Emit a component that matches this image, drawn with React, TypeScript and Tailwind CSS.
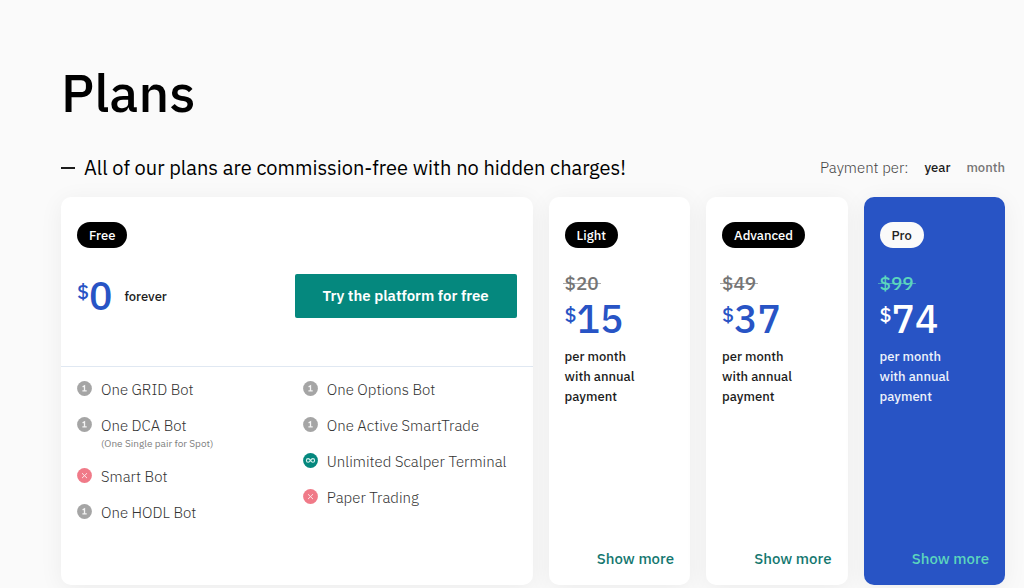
import type { ReactNode } from "react";

type Mark = "one" | "none" | "unlimited";

interface Feature {
  label: string;
  mark: Mark;
  note?: string;
}

interface Plan {
  name: string;
  oldPrice: string;
  price: string;
  highlighted?: boolean;
}

const featureColumns: Feature[][] = [
  [
    { label: "One GRID Bot", mark: "one" },
    { label: "One DCA Bot", mark: "one", note: "(One Single pair for Spot)" },
    { label: "Smart Bot", mark: "none" },
    { label: "One HODL Bot", mark: "one" },
  ],
  [
    { label: "One Options Bot", mark: "one" },
    { label: "One Active SmartTrade", mark: "one" },
    { label: "Unlimited Scalper Terminal", mark: "unlimited" },
    { label: "Paper Trading", mark: "none" },
  ],
];

const plans: Plan[] = [
  { name: "Light", oldPrice: "$20", price: "15" },
  { name: "Advanced", oldPrice: "$49", price: "37" },
  { name: "Pro", oldPrice: "$99", price: "74", highlighted: true },
];

const markColors: Record<Mark, string> = {
  one: "text-[#a5a5a5]",
  none: "text-[#f07a88]",
  unlimited: "text-[#05887e]",
};

function MarkIcon({ mark }: { mark: Mark }) {
  return (
    <svg viewBox="0 0 15 15" aria-hidden="true" className={`mt-[3px] size-[15px] shrink-0 ${markColors[mark]}`}>
      <circle cx="7.5" cy="7.5" r="7.4" fill="currentColor" />
      {mark === "one" && (
        <path d="M5.6 5.9 7.5 4.8V9.8M5.4 9.9H9.7" fill="none" stroke="#f4f4f4" strokeWidth="1.3" />
      )}
      {mark === "none" && (
        <path d="m5 5.2 5 4.9M10 5.2 5 10.1" fill="none" stroke="#fde4e7" strokeWidth="1" />
      )}
      {mark === "unlimited" && (
        <path
          d="M7.5 7.4C6.8 6.3 6.2 5.6 5.2 5.6a1.8 1.8 0 0 0 0 3.6c1 0 1.6-.7 2.3-1.8s1.3-1.8 2.3-1.8a1.8 1.8 0 0 1 0 3.6c-1 0-1.6-.7-2.3-1.8Z"
          fill="none"
          stroke="#d9f2ef"
          strokeWidth="1.1"
        />
      )}
    </svg>
  );
}

function Badge({ children, light = false }: { children: ReactNode; light?: boolean }) {
  return (
    <h2
      className={`w-fit rounded-full px-3 pt-px text-[13px] leading-[25px] font-medium ${
        light ? "bg-[#fafafa] text-[#222222]" : "bg-black text-white"
      }`}
    >
      {children}
    </h2>
  );
}

function Price({ amount, light = false }: { amount: string; light?: boolean }) {
  return (
    <p className={`flex items-start font-medium ${light ? "text-white" : "text-[#2854c5]"}`}>
      <span className="mt-1 text-[20px] leading-6">$</span>
      <span className="text-[39px] leading-10">{amount}</span>
    </p>
  );
}

function FreeCard() {
  return (
    <article className="flex flex-col rounded-[10px] bg-white shadow-[0_4px_24px_rgba(0,0,0,0.06)]">
      <header className="h-[170px] border-b border-[#e0e8f2] px-4 pt-[25px]">
        <Badge>Free</Badge>
        <div className="mt-[26px] flex items-center justify-between">
          <div className="flex items-center gap-3">
            <Price amount="0" />
            <span className="pt-px text-[13px] leading-5 font-medium text-[#1c1c1c]">forever</span>
          </div>
          <button
            type="button"
            className="h-11 w-[222px] rounded-[2px] bg-[#05887e] text-[15px] font-semibold text-white"
          >
            Try the platform for free
          </button>
        </div>
      </header>
      <div className="grid grid-cols-[226fr_214fr] px-4 pt-[11px]">
        {featureColumns.map((features, index) => (
          <ul key={index} className="flex flex-col gap-3">
            {features.map((feature) => (
              <li key={feature.label} className="flex gap-[9px] whitespace-nowrap">
                <MarkIcon mark={feature.mark} />
                <div>
                  <p className="text-[15px] leading-6 font-light text-[#333333]">{feature.label}</p>
                  {feature.note && (
                    <p className="-mt-px pb-0.5 text-[10px] leading-[14px] text-[#808080]">{feature.note}</p>
                  )}
                </div>
              </li>
            ))}
          </ul>
        ))}
      </div>
    </article>
  );
}

function PlanCard({ plan }: { plan: Plan }) {
  const { name, oldPrice, price, highlighted = false } = plan;
  return (
    <article
      className={`flex flex-col rounded-[10px] px-4 pt-[25px] pb-[14px] shadow-[0_4px_24px_rgba(0,0,0,0.06)] ${
        highlighted ? "bg-[#2854c5]" : "bg-white"
      }`}
    >
      <Badge light={highlighted}>{name}</Badge>
      <del
        className={`relative mt-[23px] w-fit text-[19px] leading-6 font-medium no-underline after:absolute after:-inset-x-0.5 after:top-1/2 after:h-px after:bg-current after:opacity-60 ${
          highlighted ? "text-[#5cd6bd]" : "text-[#757575]"
        }`}
      >
        {oldPrice}
      </del>
      <div className="mt-1">
        <Price amount={price} light={highlighted} />
      </div>
      <p
        className={`mt-2 max-w-24 text-[13px] leading-5 font-medium ${
          highlighted ? "text-[#eef2fb]" : "text-[#1c1c1c]"
        }`}
      >
        per month
        <br />
        with annual
        <br />
        payment
      </p>
      <button
        type="button"
        className={`mt-auto self-end text-[15px] leading-6 font-medium ${
          highlighted ? "text-[#5cd6bd]" : "text-[#14776f]"
        }`}
      >
        Show more
      </button>
    </article>
  );
}

export default function App() {
  return (
    <main className="min-h-screen overflow-x-hidden bg-[#fafafa] pt-[60px] pr-[19px] pb-[3px] pl-[61px] font-['IBM_Plex_Sans',Roboto,sans-serif]">
      <h1 className="text-[53px] leading-[66px] font-medium text-black">Plans</h1>
      <div className="mt-6 flex items-center justify-between pt-1 pb-[15px]">
        <p className="flex items-center gap-[9px] text-[20px] leading-7 font-normal text-black">
          <span aria-hidden="true" className="h-0.5 w-[14px] bg-[#1c1c1c]" />
          All of our plans are commission-free with no hidden charges!
        </p>
        <div className="flex items-center gap-4 text-[13px] leading-6 font-medium">
          <span className="text-[15px] font-light text-[#444444]">Payment per:</span>
          <button type="button" aria-pressed="true" className="text-[#1c1c1c]">
            year
          </button>
          <button type="button" aria-pressed="false" className="text-[#757575]">
            month
          </button>
        </div>
      </div>
      <section className="grid min-h-[388px] grid-cols-[10fr_3fr_3fr_3fr] gap-4">
        <FreeCard />
        {plans.map((plan) => (
          <PlanCard key={plan.name} plan={plan} />
        ))}
      </section>
    </main>
  );
}
